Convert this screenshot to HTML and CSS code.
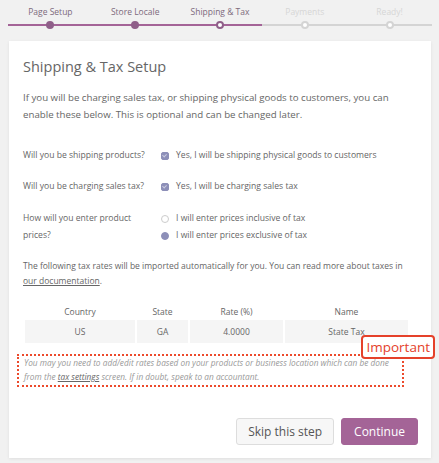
FILE: index.html
```html
<!DOCTYPE html>
<html>
<head>
	<meta charset="utf-8">
	<title>Shipping &amp; Tax Setup</title>
	<link rel="stylesheet" href="styles.css">
</head>
<body>
	<ol class="steps">
		<li class="done">Page Setup</li>
		<li class="done">Store Locale</li>
		<li class="active">Shipping &amp; Tax</li>
		<li>Payments</li>
		<li>Ready!</li>
	</ol>
	<div class="card">
		<h1>Shipping &amp; Tax Setup</h1>
		<p class="intro">If you will be charging sales tax, or shipping physical goods to customers, you can enable these below. This is optional and can be changed later.</p>
		<div class="row">
			<div class="label">Will you be shipping products?</div>
			<div class="field"><label><span class="check"></span>Yes, I will be shipping physical goods to customers</label></div>
		</div>
		<div class="row">
			<div class="label">Will you be charging sales tax?</div>
			<div class="field"><label><span class="check"></span>Yes, I will be charging sales tax</label></div>
		</div>
		<div class="row prices">
			<div class="label">How will you enter product prices?</div>
			<div class="field">
				<label><span class="radio"></span>I will enter prices inclusive of tax</label>
				<label><span class="radio on"></span>I will enter prices exclusive of tax</label>
			</div>
		</div>
		<p class="rates">The following tax rates will be imported automatically for you. You can read more about taxes in <a href="#">our documentation</a>.</p>
		<table class="tax">
			<tr><th class="c1">Country</th><th class="c2">State</th><th class="c3">Rate (%)</th><th>Name</th></tr>
			<tr><td>US</td><td>GA</td><td>4.0000</td><td>State Tax</td></tr>
		</table>
		<div class="notice">
			<span class="badge">Important</span>
			<p>You may you need to add/edit rates based on your products or business location which can be done from the <a href="#">tax settings</a> screen. If in doubt, speak to an accountant.</p>
		</div>
		<div class="actions">
			<button class="skip">Skip this step</button>
			<button class="continue">Continue</button>
		</div>
	</div>
</body>
</html>
```
FILE: styles.css
```css
body{margin: 0;background-color: #f1f1f1;font-family: 'Open Sans', sans-serif;color: #666;}
.steps{display: flex;list-style: none;margin: 0 7px 0 8px;padding: 6px 0 0;}
.steps li{flex: 1;text-align: center;font-size: 8.5px;line-height: 12px;color: #d6d6d6;padding-bottom: 6px;border-bottom: 2px solid #d4d4d4;position: relative;}
.steps li::after{content: '';position: absolute;left: 50%;bottom: -5px;margin-left: -4px;width: 4px;height: 4px;border-radius: 50%;border: 2px solid #d4d4d4;background: #fff;}
.steps li.done, .steps li.active{color: #7d6a7c;border-color: #a46497;}
.steps li.done::after{background: #8f5f89;border-color: #8f5f89;}
.steps li.active::after{border-color: #8f5f89;}
.card{background: #fff;margin: 15px 8px 3px 9px;padding: 16px 13px 13px 14px;box-shadow: 0 1px 3px rgba(0,0,0,0.08);}
h1{font-size: 14.5px;line-height: 20px;font-weight: normal;color: #666;margin: 0 0 12px;}
.intro{font-size: 9.7px;line-height: 17px;margin: 0 0 24px;color: #666;}
.row{display: flex;font-size: 8.6px;line-height: 17px;margin-bottom: 14px;}
.row.prices{margin-top: 15px;margin-bottom: 14px;}
.label{width: 130px;padding-right: 8px;}
.field label{display: flex;align-items: center;}
.check, .radio{width: 6px;height: 6px;margin-right: 7px;border: 1px solid #aaa;position: relative;}
.check{background: #8d8fb8;border-color: #8d8fb8;border-radius: 2px;}
.check::after{content: '';position: absolute;left: 1px;top: 0;width: 2px;height: 3px;border: solid #c9cae0;border-width: 0 1px 1px 0;transform: rotate(45deg);}
.radio{border-radius: 50%;border-color: #ccc;}
.radio.on{background: #8d8fb8;border-color: #8d8fb8;}
.rates{font-size: 8.5px;line-height: 15px;margin: 0 0 16px;}
a{color: #666;}
.tax{width: 387px;margin: 0;border-collapse: separate;border-spacing: 2px 0;font-size: 8.5px;}
.tax .c1{width: 110px;}
.tax .c2{width: 51px;}
.tax .c3{width: 93px;}
.tax th{font-weight: normal;padding: 2px 0 3px;line-height: 11px;}
.tax td{background: #f5f5f5;text-align: center;padding: 6px 0 5px;line-height: 12px;}
.notice{position: relative;margin: 11px 14px 0 -6px;border: 2px dotted #ec4a2c;padding: 0 5px 1px;}
.notice p{margin: 0;font-size: 8.3px;line-height: 14px;font-style: italic;color: #999;}
.badge{position: absolute;right: -33px;top: -21px;background: #fff;color: #e5412a;border: 2px solid #e5412a;border-radius: 4px;padding: 2px 3px;font-size: 13.5px;line-height: 16px;}
.actions{display: flex;justify-content: flex-end;gap: 7px;margin: 31px 0 0;}
button{font-family: 'Open Sans', sans-serif;font-size: 12px;height: 27px;padding: 0 11px;border-radius: 3px;cursor: pointer;}
.skip{background: #f7f7f7;border: 1px solid #ddd;color: #555;}
.continue{background: #a46497;border: 1px solid #a46497;color: #fff;padding: 0 12px;}
```
